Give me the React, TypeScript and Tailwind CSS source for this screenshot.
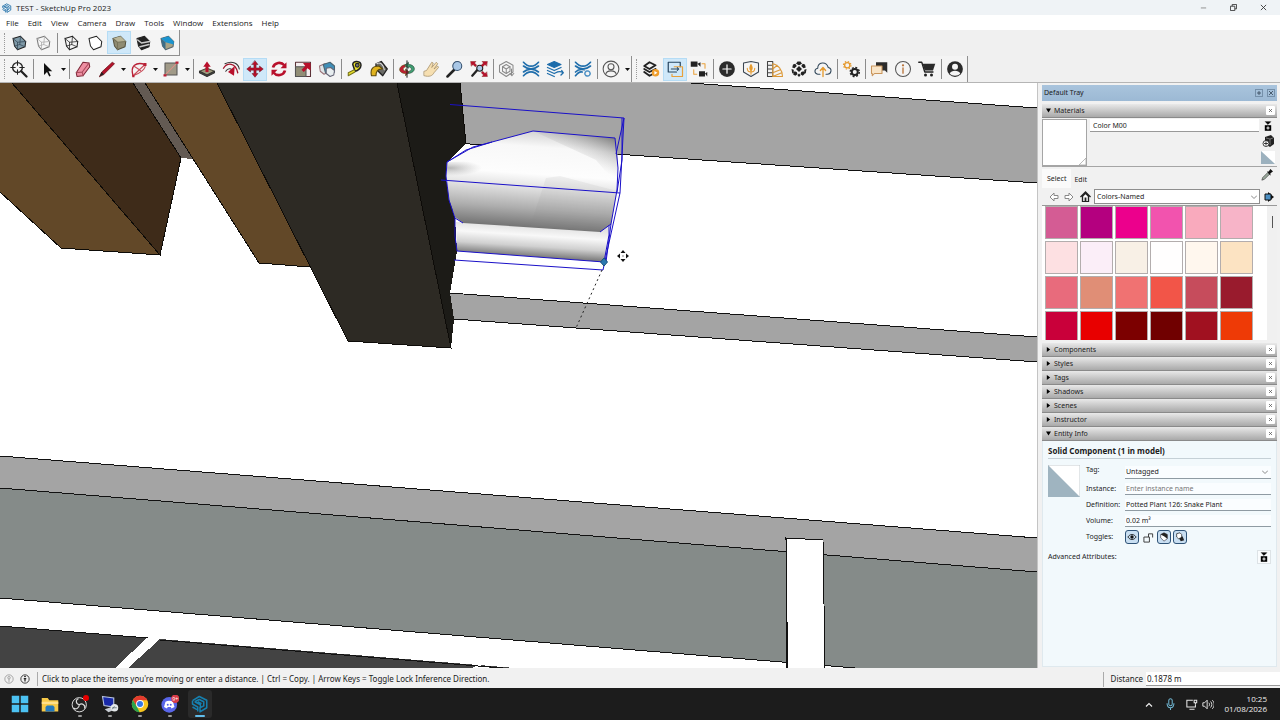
import React from "react";

type Kids = { children?: React.ReactNode };

function Ic({ children, className = "size-[18px]" }: Kids & { className?: string }) {
  return (
    <svg viewBox="0 0 24 24" className={className} fill="none" stroke="#222" strokeWidth="1.4" strokeLinejoin="round" strokeLinecap="round" aria-hidden="true">
      {children}
    </svg>
  );
}

function Tool({ label, active, children }: Kids & { label: string; active?: boolean }) {
  return (
    <button
      type="button"
      aria-label={label}
      className={
        active
          ? "flex h-[23px] w-6 shrink-0 items-center justify-center border border-[#b5dcf5] bg-[#cfe8f9]"
          : "flex h-[23px] w-6 shrink-0 items-center justify-center"
      }
    >
      {children}
    </button>
  );
}

function Sep() {
  return (
    <div className="flex w-1 shrink-0 justify-center">
      <div className="h-5 w-px bg-[#8c8c8c]" />
    </div>
  );
}

function Arrow({ label }: { label: string }) {
  return (
    <button type="button" aria-label={label} className="flex h-5 w-2 shrink-0 items-center justify-center">
      <svg viewBox="0 0 5 3" className="h-[3px] w-[5px]"><path d="M0 0h5L2.5 3z" fill="#111" /></svg>
    </button>
  );
}

function Grip() {
  return <div className="h-5 w-[3px] shrink-0 border-l border-dotted border-[#9a9a9a]" />;
}

const hex = "M4 6 L14 3 L21 10 L20 17 L10 21 L6 16 Z";
const hexEdges = "M4 6l6 5 11-1M10 11v10";
const hexBack = "M4 6l6 5 11-1M10 11v10M14 3l-1 11 7 3M13 14l-7 2";

function Logo({ className, stroke }: { className: string; stroke: string }) {
  return (
    <svg viewBox="0 0 24 24" className={className} fill="none" stroke={stroke} strokeWidth="2" strokeLinejoin="round" strokeLinecap="round" aria-hidden="true">
      <path d="M2 7.500 L11 2 L21 7 V17 L12 22.500 V17 L17 14.500 V9 L11 6 L5 9" />
      <path d="M2 7.500 V12 L9 16 V22 M2 16 L8 19.500 M5 9 L12.500 13 V17 M9 9 L14 11.500" />
    </svg>
  );
}

function StylesBar() {
  return (
    <div className="flex h-[26px] w-[180px] items-center border-r border-b border-[#8f8f8f] bg-[#f4f4f4] pl-1">
      <Grip />
      <Tool label="X-Ray"><Ic><path d={hex} fill="#7f9aa8" /><path d={hexBack} stroke="#35495a" strokeWidth="1" /></Ic></Tool>
      <Tool label="Back Edges"><Ic><path d={hex} stroke="#777" fill="#f7f7f7" /><path d={hexBack} stroke="#aaa" strokeWidth="1" /></Ic></Tool>
      <Sep />
      <Tool label="Wireframe"><Ic><path d={hex} /><path d={hexBack} strokeWidth="1" /></Ic></Tool>
      <Tool label="Hidden Line"><Ic><path d={hex} fill="#fff" /></Ic></Tool>
      <Tool label="Shaded" active><Ic><path d={hex} fill="#8f8c73" stroke="#55523f" /><path d="M4 6l6 5 11-1-7-7z" fill="#b9b598" stroke="none" /><path d={hexEdges} stroke="#77745c" /></Ic></Tool>
      <Tool label="Shaded With Textures"><Ic><path d={hex} fill="#222" /><path d="M5 8l5 4 11-2M8 17l12-3" stroke="#ccc" strokeWidth="2" /></Ic></Tool>
      <Tool label="Monochrome"><Ic><path d={hex} fill="#a8a386" stroke="#56646b" /><path d="M4 6l10-3 7 7v4l-11-3z" fill="#1b94cf" stroke="none" /><path d="M4 6l6 5v10l-4-5z" fill="#3c6d87" stroke="none" /></Ic></Tool>
    </div>
  );
}

function MainBar() {
  return (
    <div className="flex h-[27px] items-center overflow-hidden border-b border-[#b5b5b5]">
      <div className="flex h-full items-center border-r border-[#8f8f8f] bg-[#f4f4f4] pl-1">
        <Grip />
        <Tool label="Search"><Ic><circle cx="10" cy="10" r="6.500" strokeWidth="1.800" /><path d="M10 1v6M10 13v6M1 10h6M13 10h6" /><path d="M15 15l7 7" strokeWidth="3" /></Ic></Tool>
        <Sep />
        <Tool label="Select"><Ic><path d="M8 4v16l4-4 3 6 2-1-3-6h5z" fill="#111" stroke="none" /></Ic></Tool>
        <Arrow label="Selection tools" />
        <Sep />
        <Tool label="Eraser"><Ic><path d="M3 17L12 3l8 1 1 5-9 12-8 1z" fill="#ee8fa2" stroke="#7c2737" /><path d="M3 17l8-1 9-12M11 16l1 5" stroke="#a84a5b" /></Ic></Tool>
        <Tool label="Line"><Ic><path d="M2 22l3-6L19 3l3 2L8 19z" fill="#b3122b" stroke="#6b1018" strokeWidth="1" /><path d="M2 22l3-6 3 3z" fill="#222" stroke="none" /></Ic></Tool>
        <Arrow label="Line tools" />
        <Tool label="Arc"><Ic><path d="M4 21C0 8 8 2 20 6" stroke="#b81f35" strokeWidth="1.800" /><path d="M4 21L20 6M5 8l9 6M20 6c2 5-6 12-16 15" stroke="#c94a58" /><path d="M3 20h3v3H3zM18 4h4v4h-4z" fill="#b81f35" stroke="none" /></Ic></Tool>
        <Arrow label="Arc tools" />
        <Tool label="Rectangle"><Ic><path d="M4 4h16v16H4z" fill="#a09a88" stroke="#555" /><path d="M4 20L20 4" stroke="#e39088" /><path d="M2 19h4v3H2zM18 2h4v3h-4z" fill="#b81f35" stroke="none" /></Ic></Tool>
        <Arrow label="Shape tools" />
        <Sep />
        <Tool label="Push/Pull"><Ic><path d="M2 15l10-4 10 4-10 6z" fill="#9c9a7d" stroke="#4e4c3c" /><path d="M2 15v2l10 5 10-5v-2l-10 5z" fill="#64624f" stroke="#333" /><path d="M10 16V9H7l5-7 5 7h-3v7z" fill="#b8102b" stroke="none" /></Ic></Tool>
        <Tool label="Offset"><Ic><path d="M2 11C7 3 18 3 21 17" strokeWidth="1.800" stroke="#a3142a" /><path d="M4 5C14 0 22 5 23 12M5 15c3-5 9-5 10 3" stroke="#333" /><path d="M8 16l9-8-1 13z" fill="#b8102b" stroke="none" /></Ic></Tool>
        <Tool label="Move" active><Ic><path d="M12 1l4 5h-2.500v4.500H18V8l5 4-5 4v-2.500h-4.500V18H16l-4 5-4-5h2.500v-4.500H6V16l-5-4 5-4v2.500h4.500V6H8z" fill="#b8102b" stroke="#5e0b18" strokeWidth=".6" /></Ic></Tool>
        <Tool label="Rotate"><Ic><path d="M4 10C6 3 15 2 19 7M20 14C18 21 9 22 5 17" stroke="#b8102b" strokeWidth="3.600" strokeLinecap="butt" /><path d="M22 3v8h-8zM2 21v-8h8z" fill="#b8102b" stroke="none" /></Ic></Tool>
        <Tool label="Scale"><Ic><path d="M2 3h20v19H2z" fill="#f5eeee" stroke="#5b3338" /><path d="M2 9h14v13H2z" fill="#918e76" stroke="#555" /><path d="M10 13l5-5-3-4h10v10l-4-3-5 5z" fill="#b8102b" stroke="none" /></Ic></Tool>
        <Tool label="Flip"><Ic><path d="M2 8l7-3 5 3v8l-6 3-5-4z" fill="#dfe5e8" stroke="#9a7277" /><path d="M7 6l9-3 6 5v8l-6 4-6-3z" fill="#3f8fb8" stroke="#4c6470" /><path d="M11 11l6-1 5 4-1 6-5 2-5-4z" fill="#e8eef0" stroke="#667" /></Ic></Tool>
        <Sep />
        <Tool label="Tape Measure"><Ic><path d="M9 6c0-6 11-5 11 1 0 4-5 8-8 8z" fill="#e8e029" strokeWidth="2" /><circle cx="15" cy="7" r="2.500" fill="#777" /><path d="M11 13l-8 4v4l9-5" fill="#e8e029" stroke="#77731a" /></Ic></Tool>
        <Tool label="Paint Bucket"><Ic><path d="M8 5l7-3 8 10-6 9-9-9z" fill="#6a6a66" strokeWidth="1.800" /><path d="M2 21c-2-8 1-13 10-13l5 4c-7-1-9 4-9 9z" fill="#e1b31e" stroke="#5d4a0c" /><path d="M9 5c5-3 9 2 10 8" stroke="#ddd" /></Ic></Tool>
        <Sep />
        <Tool label="Orbit"><Ic><path d="M10 6C-1 8 0 18 10 18v3l5-5-5-4v3c-4-1-4-5 0-6z" fill="#c01c32" stroke="#551" strokeWidth=".8" /><path d="M14 18c11-1 10-12 0-12V3L9 7l5 4V9c5 1 5 5 1 6z" fill="#3f9d72" stroke="#243" strokeWidth=".8" /><path d="M12 1v22" /></Ic></Tool>
        <Tool label="Pan"><Ic><path d="M3 15l3-1 7-11 2 1-2 6 6-7 2 2-5 7 5-4 1 2-6 7c-2 4-6 6-13 4z" fill="#f6dfb1" stroke="#a48e66" strokeWidth="1" /></Ic></Tool>
        <Tool label="Zoom"><Ic><path d="M2 22l9-9" strokeWidth="3.400" /><circle cx="15" cy="8" r="6" fill="#a9c7e6" stroke="#35506e" /></Ic></Tool>
        <Tool label="Zoom Extents"><Ic><path d="M3 21l7-8" strokeWidth="3" /><circle cx="13" cy="11" r="4" fill="#a9c7e6" /><path d="M1 2h7L6 4l3 3-2 2-3-3-2 2zM23 2h-7l2 2-3 3 2 2 3-3 2 2zM23 22h-7l2-2-3-3 2-2 3 3 2-2z" fill="#b8102b" stroke="#700" strokeWidth=".5" /></Ic></Tool>
        <Sep />
        <Tool label="3D Warehouse"><Ic><path d="M2 7l9-5 9 5v9l-9 6-9-6zM6 9l5-3 5 3v6l-5 3-5-3z" stroke="#8a8a8a" /><path d="M6 9l5 3 5-3M11 12v5M18 12v8M16 18l2.500 3 2.500-3" stroke="#8a8a8a" /></Ic></Tool>
        <Tool label="Trimble Connect"><Ic><path d="M2 3c6 7 14 7 20 0M2 8c6 5 14 5 20 0M2 16c6-5 14-5 20 0M2 21c6-7 14-7 20 0" stroke="#1e6dab" strokeWidth="2.200" /></Ic></Tool>
        <Tool label="Extension Warehouse"><Ic><path d="M2 6l9-4 9 4-9 4z" fill="#1e6dab" stroke="#1e6dab" /><path d="M2 10l9 4 9-4M2 14l9 4 4-2M2 18l9 4M13 17c4-2 7-2 10 0l-2-3M23 17l-3 3" stroke="#1e6dab" strokeWidth="1.800" /></Ic></Tool>
        <Sep />
        <Tool label="Connect Settings"><Ic><path d="M2 3c6 7 14 7 20 0M2 8c6 5 14 5 20 0M2 16c4-4 8-4 12-3M2 21c3-4 6-6 9-5" stroke="#1e6dab" strokeWidth="2.200" /><circle cx="18" cy="18" r="3.500" stroke="#4b8fc3" strokeDasharray="2 1" strokeWidth="2" /></Ic></Tool>
        <Sep />
        <Tool label="Account"><Ic><circle cx="12" cy="12" r="10.500" stroke="#555" /><circle cx="12" cy="9" r="4" stroke="#555" /><path d="M5 19c1-6 13-6 14 0" stroke="#555" /></Ic></Tool>
        <Arrow label="Account menu" />
      </div>
      <div className="flex h-full items-center border-r border-[#8f8f8f] bg-[#f4f4f4] pl-1">
        <Grip />
        <Tool label="Render"><Ic><path d="M3 8l7-5 8 4-8 5zM3 12l7 4 8-4M3 16l7 5 4-2" strokeWidth="2.600" /><circle cx="18" cy="17" r="5" fill="#ef9d2b" stroke="none" /><path d="M16.500 14.500l4 2.500-4 2.500z" fill="#fff" stroke="none" /></Ic></Tool>
        <Tool label="Sync View" active><Ic><path d="M14 16H3V3h16v6" stroke="#26445f" strokeWidth="1.600" /><path d="M11 9h11v13H8v-3" stroke="#e9a13b" strokeWidth="1.600" /><path d="M7 12h10M15 10l2 2-2 2" stroke="#26445f" /></Ic></Tool>
        <Tool label="Camera Sync"><Ic><path d="M1 2h9v7H1zM10 5l4-2v6zM12 15h8v7h-8zM20 18l3-2v6z" fill="#222" stroke="none" /><path d="M16 5h4v6M5 13v6h4" stroke="#e9a13b" /></Ic></Tool>
        <Sep />
        <Tool label="Add"><Ic><circle cx="12" cy="12" r="10.500" fill="#2b2b2b" stroke="none" /><path d="M12 6.500v11M6.500 12h11" stroke="#fff" strokeWidth="1.600" /></Ic></Tool>
        <Tool label="Assets"><Ic><path d="M2 4l10-2 10 2v12l-10 6-10-6z" stroke="#3b4652" /><path d="M12 5c-3 4-3 8 0 10 3-2 3-6 0-10z" fill="#e59a2e" stroke="none" /><path d="M7 11c0 3 2 5 5 5s5-2 5-5M12 14v5" stroke="#e59a2e" /></Ic></Tool>
        <Tool label="Material Library"><Ic><path d="M2 2h7v20H2zM2 7h7M2 12h7M2 17h7" stroke="#444" /><path d="M9 5c7 1 13 8 13 17H9zM9 12l6-5M9 17l10-4M9 22L21 17" stroke="#dc9938" /></Ic></Tool>
        <Tool label="Texture"><Ic><path d="M10 2h4l2 3-4 2-4-2zM4 6l3-1 2 3-3 3-3-1zM17 5l3 1 1 4-3 1-3-3zM12 8l4 4-4 4-4-4zM2 12l3 1v4l-2 1zM22 12l-3 1v4l2 1zM6 15l3 1 1 3-3 2-3-2zM18 15l2 3-3 3-3-2 1-3zM10 20l2-2 2 2-1 2h-2z" fill="#222" stroke="none" /></Ic></Tool>
        <Tool label="Upload"><Ic><path d="M8 19H5c-5-1-5-7 0-8 0-8 11-10 14-1 6 1 4 9-1 9h-2" stroke="#34495b" /><path d="M12 22V11M8.500 14l3.500-4 3.500 4" stroke="#e59a2e" strokeWidth="1.800" /></Ic></Tool>
        <Sep />
        <Tool label="Settings"><Ic><circle cx="7" cy="7" r="3.500" stroke="#e59a2e" strokeWidth="1.800" /><circle cx="7" cy="7" r="5" stroke="#e59a2e" strokeWidth="1.600" strokeDasharray="1.900 2.030" strokeLinecap="butt" /><circle cx="17" cy="16" r="4" strokeWidth="2.600" /><circle cx="17" cy="16" r="6" strokeWidth="2" strokeDasharray="2.600 2.110" strokeLinecap="butt" /></Ic></Tool>
        <Sep />
        <Tool label="Feedback"><Ic><path d="M8 3h15v14l-3-3H8z" fill="#2b2b2b" stroke="none" /><path d="M2 8h14v10H6l-3 3V18H2z" fill="#f9e5c8" stroke="#c9955c" /></Ic></Tool>
        <Tool label="About"><Ic><circle cx="12" cy="12" r="10" stroke="#555" /><path d="M12 10.500v7" stroke="#b8733a" strokeWidth="1.800" /><circle cx="12" cy="7" r=".8" stroke="#b8733a" /></Ic></Tool>
        <Tool label="Store"><Ic><path d="M1 3h4l4 13h11" strokeWidth="1.800" /><path d="M6 5h17l-3 9H9z" fill="#2b2b2b" stroke="none" /><circle cx="10" cy="20" r="2" fill="#222" stroke="none" /><circle cx="18" cy="20" r="2" fill="#222" stroke="none" /></Ic></Tool>
        <Sep />
        <Tool label="Profile"><Ic><circle cx="12" cy="12" r="10.500" fill="#2b2b2b" stroke="none" /><circle cx="12" cy="9" r="4" fill="#f4f4f4" stroke="none" /><path d="M5 18c2-5 12-5 14 0-3 4-11 4-14 0z" fill="#f4f4f4" stroke="none" /></Ic></Tool>
      </div>
    </div>
  );
}

function Viewport() {
  return (
    <svg viewBox="0 83 1037 585" preserveAspectRatio="xMinYMin slice" className="min-h-0 min-w-0 flex-1 bg-white" role="img" aria-label="3D model view">
      <defs>
        <linearGradient id="pot" gradientUnits="userSpaceOnUse" x1="535" y1="133" x2="528" y2="230">
          <stop offset="0" stopColor="#d8d8d8" />
          <stop offset=".14" stopColor="#f8f8f8" />
          <stop offset=".42" stopColor="#fdfdfd" />
          <stop offset=".56" stopColor="#e2e2e2" />
          <stop offset=".78" stopColor="#adadad" />
          <stop offset="1" stopColor="#6c6c6c" />
        </linearGradient>
        <linearGradient id="rim" gradientUnits="userSpaceOnUse" x1="532" y1="226" x2="530" y2="257">
          <stop offset="0" stopColor="#e2e2e2" />
          <stop offset=".3" stopColor="#f8f8f8" />
          <stop offset=".65" stopColor="#d0d0d0" />
          <stop offset="1" stopColor="#777" />
        </linearGradient>
        <linearGradient id="corner" gradientUnits="userSpaceOnUse" x1="604" y1="134" x2="590" y2="166">
          <stop offset="0" stopColor="#666" stopOpacity=".75" />
          <stop offset=".5" stopColor="#999" stopOpacity=".4" />
          <stop offset="1" stopColor="#bbb" stopOpacity="0" />
        </linearGradient>
        <radialGradient id="dent" gradientUnits="userSpaceOnUse" cx="450" cy="168" r="32" gradientTransform="matrix(1 0 0 .25 0 126)">
          <stop offset="0" stopColor="#888" stopOpacity=".6" />
          <stop offset="1" stopColor="#aaa" stopOpacity="0" />
        </radialGradient>
      </defs>
      <g shapeRendering="crispEdges">
        <path d="M455 66L1037 108V183L455 143z" fill="#a4a4a4" />
        <path d="M450 293L1037 337V362L454 319z" fill="#a4a4a4" />
        <path d="M0 456L1037 538V572L0 488z" fill="#a4a4a4" />
        <path d="M0 488L1037 572V668H855L0 598z" fill="#858b89" />
        <path d="M0 626L515 668H0z" fill="#434343" />
        <path d="M148 637L160 639L128 668H115zM478 665L490 667L487 668H472z" fill="#fff" />
        <path d="M455 66L1037 108M455 143L1037 183M450 293L1037 337M454 319L1037 362M0 456L1037 538M0 488L1037 572M0 598L855 668M0 626L148 638M160 640L515 669" fill="none" stroke="#111" />
        <path d="M786 538L823 540L825 668H787z" fill="#fff" />
        <path d="M787 668L786 538L823 540L825 668M787 622V668" fill="none" stroke="#111" />

        <path d="M0 83H12L160 255L61 248L0 192z" fill="#624828" />
        <path d="M12 83H133L181 158L160 255z" fill="#3e2b19" />
        <path d="M133 83H145L193 159L181 158z" fill="#635a53" />
        <path d="M145 83H217L310 267L259 263z" fill="#624828" />
        <path d="M217 83H397L451 348L348 341z" fill="#2d2a24" />
        <path d="M397 83H460L466 144L447 162L446 180L455 219L457 251L450 293L454 319L451 348z" fill="#1c1b17" />
        <path d="M12 83L160 255L61 248L0 192M133 83L181 158L160 255M145 83L259 263L310 267M217 83L348 341L451 348L397 83M460 83L466 144" fill="none" stroke="#0d0b08" />
      </g>
      <path d="M456 222L609 227L608 244L604 262L457 251z" fill="url(#rim)" />
      <path d="M447 162L466 151L492 142L533 131L615 138L618 160L617 190L611 224L600 232L463 223L455 217L449 200L446 176z" fill="url(#pot)" />
      <path d="M533 131L615 138L618 160L617 185L596 160z" fill="url(#corner)" />
      <path d="M447 162L500 160V180H446z" fill="url(#dent)" />
      <path d="M546 178L560 176L617 191L611 224L600 231L530 227z" fill="#888" fillOpacity=".1" />
      <g fill="none" stroke="#1a10c8" strokeWidth="1">
        <path d="M450 104.500L624 118L620 193L603 270L454 260M441 180L620 193" />
        <path d="M463 223L455 218L449 200L446 176L447 162L466 150L492 142L533 131L615 138L618 168L617 190L611 224L600 232M455 218L455 236L457 251L604 262L609 235V225M447 162L473 147L492 142M624 118L616 154M622 118L622 160L617 192M611 224L606 262" />
      </g>
      <path d="M602 270L576 328" stroke="#222" strokeDasharray="2 3" />
      <path d="M604 258l3.500 4-3.500 4-3.500-4z" fill="#2b78b0" stroke="#17507c" />
      <g fill="#111" transform="translate(623 256)">
        <path d="M0-6l2.500 3h-5zM0 6l2.500-3h-5zM-6 0l3-2.500v5zM6 0l-3-2.500v5z" />
        <path d="M-.5-.5h1v1h-1z" />
      </g>
    </svg>
  );
}

function PanelHeader({ title, open }: { title: string; open?: boolean }) {
  return (
    <div className="flex h-[14px] shrink-0 items-center border-b border-[#8a8a8a] bg-linear-to-b from-[#e9e9e9] to-[#a9a9a9] pr-[2px]">
      <button type="button" aria-expanded={!!open} className="flex flex-1 items-center gap-[3px] pl-1">
        <svg viewBox="0 0 6 6" className="size-[5px]">
          {open ? <path d="M0 .5h6L3 5.500z" /> : <path d="M1 0l4 3-4 3z" />}
        </svg>
        <span>{title}</span>
      </button>
      <button type="button" aria-label={"Close " + title} className="flex size-[9px] items-center justify-center rounded-[1px] bg-white">
        <svg viewBox="0 0 4 4" className="size-[3px]" stroke="#555"><path d="M0 0l4 4M4 0L0 4" /></svg>
      </button>
    </div>
  );
}

const swatches = [
  ["Pale Violet Red", "bg-[#d45c94]"], ["Medium Violet Red", "bg-[#b4007f]"], ["Deep Pink", "bg-[#ec008c]"], ["Hot Pink", "bg-[#f253ae]"], ["Light Pink", "bg-[#f9aabd]"], ["Pink", "bg-[#f7b4c8]"],
  ["Misty Rose", "bg-[#fde0e2]"], ["Lavender Blush", "bg-[#fbeef8]"], ["Linen", "bg-[#f8f0e6]"], ["Snow", "bg-[#fffefe]"], ["Seashell", "bg-[#fff7ee]"], ["Bisque", "bg-[#fce3c2]"],
  ["Light Coral", "bg-[#e86b7c]"], ["Dark Salmon", "bg-[#e08e76]"], ["Salmon", "bg-[#f07272]"], ["Tomato", "bg-[#f25548]"], ["Indian Red", "bg-[#c64c5c]"], ["Brown", "bg-[#991b2d]"],
  ["Crimson", "bg-[#c9003a]"], ["Red", "bg-[#e80000]"], ["Dark Red", "bg-[#7c0000]"], ["Maroon", "bg-[#700000]"], ["Fire Brick", "bg-[#a01120]"], ["Orange Red", "bg-[#ee3a06]"],
];

function ExpandIcon() {
  return (
    <svg viewBox="0 0 10 12" className="h-[10px] w-2" aria-hidden="true">
      <path d="M1 0h8M2 1h6L5 4z" stroke="#111" strokeWidth=".8" />
      <path d="M1 5h8v7H1z" />
      <path d="M5 6.500v4M3 8.500h4" stroke="#fff" strokeWidth="1.200" />
    </svg>
  );
}

function Materials() {
  return (
    <div className="h-[225px] shrink-0">
      <div className="flex h-[49px] border-b border-[#a5a5a5] pt-px">
        <div className="flex h-[47px] w-[45px] items-end justify-end border border-[#a5a5a5] bg-white">
          <svg viewBox="0 0 6 6" className="size-[7px]" stroke="#aaa" fill="none" strokeWidth=".7"><path d="M6 0L0 6h6z" /></svg>
        </div>
        <input aria-label="Material name" defaultValue="Color M00" className="ml-[3px] h-[13px] min-w-0 flex-1 border-b border-[#999] bg-white px-[3px] outline-none" />
        <div className="flex w-[18px] flex-col items-center gap-1 pt-[2px]">
          <button type="button" aria-label="Display secondary pane"><ExpandIcon /></button>
          <button type="button" aria-label="Create material">
            <svg viewBox="0 0 12 12" className="size-3"><path d="M3 2l6-2 3 3v6l-4 3-5-3z" fill="#222" /><path d="M4 3l4 1 3-1M8 4v6" stroke="#aaa" strokeWidth=".6" fill="none" /><circle cx="4" cy="8.500" r="3" fill="#fff" stroke="#111" strokeWidth=".8" /><path d="M4 6.500v4M2 8.500h4" stroke="#111" strokeWidth=".8" /></svg>
          </button>
          <button type="button" aria-label="Set to default"><svg viewBox="0 0 14 13" className="h-[13px] w-[14px]"><path d="M0 0h14v13H0z" fill="#fff" /><path d="M0 0l14 13H0z" fill="#9cb1be" /></svg></button>
        </div>
      </div>
      <div className="flex h-[21px] items-end">
        <button type="button" className="h-[19px] bg-[#fafafa] px-[5px]">Select</button>
        <button type="button" className="h-[17px] px-[3px]">Edit</button>
        <button type="button" aria-label="Sample paint" className="ml-auto flex size-4 items-center self-start">
          <svg viewBox="0 0 14 14" className="size-3"><path d="M1 13l1-3 6-6 2 2-6 6z" fill="#99a89a" stroke="#444" strokeWidth=".8" /><path d="M7 3l2 0 2-3 3 3-3 2v3z" fill="#111" /></svg>
        </button>
      </div>
      <div className="flex h-[17px] items-center">
        <div className="flex w-[52px] items-center justify-around pl-1">
          <button type="button" aria-label="Back"><svg viewBox="0 0 10 10" className="size-[10px]" fill="#fff" stroke="#888"><path d="M1 5l4-4v2.500h4v3H5V9z" /></svg></button>
          <button type="button" aria-label="Forward"><svg viewBox="0 0 10 10" className="size-[10px]" fill="#fff" stroke="#888"><path d="M9 5L5 1v2.500H1v3h4V9z" /></svg></button>
          <button type="button" aria-label="In model"><svg viewBox="0 0 12 12" className="size-[11px]"><path d="M0 6l6-6 6 6-1 1-1-1v6H2V6L1 7z" fill="#222" /><path d="M3.500 6L6 3.500 8.500 6v5H7V7H5v4H3.500z" fill="#fff" /></svg></button>
        </div>
        <div className="relative min-w-0 flex-1">
          <select aria-label="Collection" className="block h-[15px] w-full appearance-none border border-[#8e8e8e] bg-white pl-[2px] outline-none"><option>Colors-Named</option></select>
          <svg viewBox="0 0 6 4" className="pointer-events-none absolute top-1.5 right-[3px] h-1 w-[6px]" fill="none" stroke="#888"><path d="M0 .5l3 3 3-3" /></svg>
        </div>
        <button type="button" aria-label="Details" className="flex w-[17px] items-center justify-center"><svg viewBox="0 0 10 10" className="size-[10px]"><path d="M4 0l6 5-6 5z" fill="#111" /><path d="M1 2h6v6H1z" fill="#4b8fc3" stroke="#111" /></svg></button>
      </div>
      <div className="flex h-[135px] overflow-hidden border-t border-[#999] bg-white">
        <div className="grid flex-1 grid-cols-[repeat(6,35px)] content-start pl-[3px]">
          {swatches.map(([name, color]) => (
            <button key={name} type="button" aria-label={name} className="size-[35px] pr-[2px] pb-[2px]">
              <span className={"block h-full w-full border border-[#b3adad] " + color} />
            </button>
          ))}
        </div>
        <div className="w-[10px] shrink-0 bg-[#f0f0f0] pt-[10px] pl-[5px]">
          <div className="h-3 w-px bg-[#555]" />
        </div>
      </div>
    </div>
  );
}

const fieldCls = "h-[12px] min-w-0 flex-1 border-b border-[#8f9ba3] bg-[#fafdff] px-[1px] outline-none placeholder:text-[#777]";

function ToggleBtn({ label, children }: Kids & { label: string }) {
  return (
    <button type="button" aria-label={label} className="flex size-[14px] items-center justify-center rounded-[3px] border border-[#2f5377] bg-[#c9dff2]">
      <svg viewBox="0 0 12 12" className="size-[10px]" fill="none" stroke="#111">{children}</svg>
    </button>
  );
}

function EntityInfo() {
  return (
    <div className="flex-1 border border-t-0 border-[#dfe9ee] bg-[#f2f9fc] px-[5px]">
      <h2 className="h-[18px] border-b border-[#c5d0d6] pt-px text-[8px] leading-[18px] font-bold">Solid Component (1 in model)</h2>
      <div className="flex pt-1">
        <svg viewBox="0 0 32 32" className="mt-[2px] size-8 shrink-0"><path d="M0 0h32v32H0z" fill="#fff" stroke="#c5ccd0" /><path d="M0 0l32 32H0z" fill="#9fb4c0" /></svg>
        <div className="ml-[6px] min-w-0 flex-1">
          <div className="flex h-[18px] items-center">
            <label htmlFor="tag" className="w-[39px] pb-1">Tag:</label>
            <div className="relative min-w-0 flex-1">
              <select id="tag" className="block h-[13px] w-full appearance-none border-b border-[#8f9ba3] bg-[#fafdff] pl-px outline-none"><option>Untagged</option></select>
              <svg viewBox="0 0 6 4" className="pointer-events-none absolute top-1 right-[3px] h-1 w-[6px]" fill="none" stroke="#888"><path d="M0 .5l3 3 3-3" /></svg>
            </div>
          </div>
          <div className="flex h-4 items-center"><label htmlFor="instance" className="w-[39px]">Instance:</label><input id="instance" placeholder="Enter instance name" className={fieldCls} /></div>
          <div className="flex h-4 items-center"><label htmlFor="definition" className="w-[39px]">Definition:</label><input id="definition" defaultValue="Potted Plant 126: Snake Plant" className={fieldCls} /></div>
          <div className="flex h-4 items-center"><label htmlFor="volume" className="w-[39px]">Volume:</label><input id="volume" readOnly value="0.02 m³" className={fieldCls} /></div>
          <div className="flex h-4 items-center gap-[2px]">
            <span className="w-[37px]">Toggles:</span>
            <ToggleBtn label="Visible"><path d="M1 6c3-4 7-4 10 0-3 4-7 4-10 0z" /><circle cx="6" cy="6" r="1.500" fill="#111" /></ToggleBtn>
            <button type="button" aria-label="Unlocked" className="flex size-[14px] items-center justify-center"><svg viewBox="0 0 12 12" className="size-[11px]" fill="none" stroke="#333"><path d="M1 5.500h6V11H1zM6 5.500V2h4.500v4" /></svg></button>
            <ToggleBtn label="Receive shadows"><path d="M2 3l4-2 4 2v5l-4 3-4-4z" fill="#fff" stroke="#334" strokeWidth=".8" /><path d="M2 3l4-2 4 2v5L6 5z" fill="#222" stroke="none" /></ToggleBtn>
            <ToggleBtn label="Cast shadows"><path d="M2 2l4-1 2 2v4L4 8 2 6z" fill="#fff" strokeWidth=".8" /><path d="M5 8l4-3 2 5-4 1z" fill="#222" stroke="none" /></ToggleBtn>
          </div>
        </div>
      </div>
      <div className="mt-1 flex h-4 items-center justify-between">
        <span>Advanced Attributes:</span>
        <button type="button" aria-label="Show advanced attributes" className="flex size-[14px] items-center justify-center border border-[#dde3e6] bg-[#fafcfd]"><ExpandIcon /></button>
      </div>
    </div>
  );
}

function Tray() {
  return (
    <aside className="flex w-[242px] shrink-0 flex-col bg-[#f1f1f1] pt-[2px] pr-[3px] pb-px pl-1 font-['Noto_Sans','Open_Sans',sans-serif] text-[7px] leading-[10px] text-[#1c1c1c]">
      <div className="mb-[3px] flex h-4 shrink-0 items-center bg-linear-to-b from-[#a9c4dd] to-[#9cb9d4] px-[2px]">
        <span className="flex-1">Default Tray</span>
        <div className="flex gap-1">
          <button type="button" aria-label="Pin" className="flex size-[8px] items-center justify-center border border-[#7590aa]"><svg viewBox="0 0 4 4" className="size-1" stroke="#345" strokeWidth=".8"><path d="M0 2h4M2 0v4" /></svg></button>
          <button type="button" aria-label="Close tray" className="flex size-[8px] items-center justify-center border border-[#7590aa]"><svg viewBox="0 0 4 4" className="size-1" stroke="#345" strokeWidth=".8"><path d="M0 0l4 4M4 0L0 4" /></svg></button>
        </div>
      </div>
      <PanelHeader title="Materials" open />
      <Materials />
      {["Components", "Styles", "Tags", "Shadows", "Scenes", "Instructor"].map((t) => <PanelHeader key={t} title={t} />)}
      <PanelHeader title="Entity Info" open />
      <EntityInfo />
    </aside>
  );
}

function Task({ label, running, active, children }: Kids & { label: string; running?: boolean; active?: boolean }) {
  return (
    <button type="button" aria-label={label} className={active ? "mx-[3px] flex h-7 w-6 flex-col items-center justify-center rounded-[3px] bg-[#2a2a2a] pt-[3px]" : "flex h-7 w-[30px] flex-col items-center justify-center pt-[3px]"}>
      <svg viewBox="0 0 24 24" className="size-[18px]" aria-hidden="true">{children}</svg>
      <span className={active ? "mt-[2px] h-[2px] w-[10px] rounded bg-[#62bdea]" : running ? "mt-[2px] h-[2px] w-1 rounded bg-[#9a9a9a]" : "mt-[2px] h-[2px] w-1"} />
    </button>
  );
}

function Taskbar() {
  return (
    <footer className="flex h-8 shrink-0 items-center bg-[#1c1c1c] pr-[13px] pl-[5px] text-[8px] text-[#eee]">
      <Task label="Start"><path d="M1 1h10v10H1zM13 1h10v10H13zM1 13h10v10H1zM13 13h10v10H13z" fill="#4cc2f2" /></Task>
      <Task label="File Explorer"><path d="M1 4h8l2 3h12v15H1z" fill="#f7c948" /><path d="M1 9h22v3H1z" fill="#ffe08a" /><path d="M6 22v-6l2-2h8l2 2v6z" fill="#2379bd" /></Task>
      <Task label="OBS Studio" running><circle cx="11" cy="13" r="9.500" fill="#222" stroke="#ddd" strokeWidth="1.300" /><path d="M11 13c-5-1-5-7-1-8M11 13c4-3 9 1 7 5M11 13c0 5-5 7-8 4" stroke="#ddd" strokeWidth="1.600" fill="none" /><circle cx="20" cy="4" r="4" fill="#e60000" /></Task>
      <Task label="Remote Desktop" running><path d="M2 2l15 2v12L4 14z" fill="#1829a8" stroke="#b8c4df" strokeWidth="1.500" /><path d="M5 19l9-3 5 3-9 4z" fill="#c9ced4" /><circle cx="18" cy="17" r="5" fill="#e3e7e9" /><path d="M15 17h6M18 15l-3 4" stroke="#53646e" /></Task>
      <Task label="Chrome" running><circle cx="12" cy="12" r="11" fill="#f7c51e" /><path d="M2.500 6.500A11 11 0 0 1 22 7H12L7 14z" fill="#e33b2e" /><path d="M2.500 6.500L7.500 15l4 8A11 11 0 0 1 2.500 6.500z" fill="#2ca24c" /><circle cx="12" cy="12" r="5.200" fill="#fff" /><circle cx="12" cy="12" r="4" fill="#3578e5" /></Task>
      <Task label="Discord" running><circle cx="11" cy="13" r="10.500" fill="#5865e8" /><path d="M6 9c3-2 7-2 10 0l2 7-4 2-1-2H9l-1 2-4-2z" fill="#fff" /><circle cx="9" cy="13" r="1.300" fill="#5865e8" /><circle cx="13" cy="13" r="1.300" fill="#5865e8" /><circle cx="19" cy="5" r="5.500" fill="#d83c49" /><text x="15" y="7.500" fontSize="7" fill="#fff" fontFamily="Open Sans, sans-serif">9+</text></Task>
      <Task label="SketchUp" active><g fill="none" stroke="#1680b0" strokeWidth="2" strokeLinejoin="round"><path d="M2 7.500L11 2l10 5v10l-9 5.500V17l5-2.500V9l-6-3-6 3" /><path d="M2 7.500V12l7 4v6M2 16l6 3.500M5 9l7.500 4v4M9 9l5 2.500" /></g></Task>
      <div className="ml-auto flex items-center">
        <svg viewBox="0 0 8 5" className="mr-[13px] h-[5px] w-2" fill="none" stroke="#eee" strokeWidth="1.200"><path d="M1 4.500l3-3 3 3" /></svg>
        <svg viewBox="0 0 10 14" className="mr-[11px] h-3 w-[9px]" fill="none" stroke="#72b9d5" strokeWidth="1.200"><rect x="3" y="1" width="4" height="8" rx="2" /><path d="M1 6c0 7 8 7 8 0M5 11.500V14" /></svg>
        <svg viewBox="0 0 14 12" className="mr-1 h-[11px] w-3" fill="none" stroke="#e8e8e8" strokeWidth="1.200"><path d="M8 1H1v8h10V6M4 11.500h6" /><path d="M9.500 1h3v3h-3zM11 4v2" /></svg>
        <svg viewBox="0 0 14 12" className="mr-[11px] h-[11px] w-3" fill="none" stroke="#e8e8e8" strokeWidth="1.100"><path d="M1 4h2l3-3v10L3 8H1zM8 4c1 1 1 3 0 4M10 2.500c2 2 2 5 0 7M12 1c3 3 3 7 0 10" /></svg>
        <div className="text-right leading-[10px]">
          <div>10:25</div>
          <div>01/08/2026</div>
        </div>
      </div>
    </footer>
  );
}

export default function App() {
  return (
    <div className="flex h-screen flex-col overflow-hidden bg-[#f0f0f0] font-['Open_Sans','Noto_Sans',sans-serif] text-[8px] leading-[14px] text-[#1b1b1b]">
      <header className="flex h-[15px] shrink-0 items-center bg-[#eff3f6] pl-[2px]">
        <Logo className="size-[10px]" stroke="#1d6fa8" />
        <h1 className="ml-1 flex-1">TEST - SketchUp Pro 2023</h1>
        <div className="flex pr-[2px]">
          <button type="button" aria-label="Minimize" className="flex w-[30px] items-center justify-center"><svg viewBox="0 0 8 8" className="size-[7px]" fill="none" stroke="#888"><path d="M1 4.500h6" /></svg></button>
          <button type="button" aria-label="Restore" className="flex w-[30px] items-center justify-center"><svg viewBox="0 0 8 8" className="size-[7px]" fill="none" stroke="#333"><path d="M.5 2.500h5v5h-5zM2.500 2.500v-2h5v5h-2" /></svg></button>
          <button type="button" aria-label="Close" className="flex w-[30px] items-center justify-center"><svg viewBox="0 0 8 8" className="size-[7px]" fill="none" stroke="#333"><path d="M1 1l6 6M7 1L1 7" /></svg></button>
        </div>
      </header>
      <nav className="flex h-[15px] shrink-0 items-center gap-[9px] bg-white pl-[6px]">
        {["File", "Edit", "View", "Camera", "Draw", "Tools", "Window", "Extensions", "Help"].map((m) => (
          <button key={m} type="button">{m}</button>
        ))}
      </nav>
      <div className="shrink-0">
        <StylesBar />
        <MainBar />
      </div>
      <main className="flex min-h-0 flex-1">
        <Viewport />
        <div className="w-px shrink-0 bg-[#c4c4c4]" />
        <Tray />
      </main>
      <div className="flex h-5 shrink-0 items-center bg-[#f1f1f1] pt-[2px] pl-1 font-['Noto_Sans','Open_Sans',sans-serif]">
        <svg viewBox="0 0 12 12" className="size-[10px]" fill="none" stroke="#999"><circle cx="6" cy="6" r="5" /><circle cx="6" cy="4.500" r="1.500" /><path d="M6 6v3.500" /></svg>
        <svg viewBox="0 0 12 12" className="ml-[6px] size-[10px]" fill="none" stroke="#222"><circle cx="6" cy="6" r="5" /><path d="M6 5v4M4.500 5.500h3" strokeWidth="1.500" /><circle cx="6" cy="3" r=".6" fill="#222" /></svg>
        <div className="mr-1 ml-[7px] h-[14px] w-px bg-[#aaa]" />
        <p className="flex-1 truncate">Click to place the items you're moving or enter a distance. | Ctrl = Copy. | Arrow Keys = Toggle Lock Inference Direction.</p>
        <label className="flex h-[15px] items-center border-l border-[#aaa] pl-[7px]">
          <span className="mr-[3px]">Distance</span>
          <input defaultValue="0.1878 m" className="h-[14px] w-[134px] border-b border-[#999] bg-white px-px outline-none" />
        </label>
      </div>
      <Taskbar />
    </div>
  );
}
